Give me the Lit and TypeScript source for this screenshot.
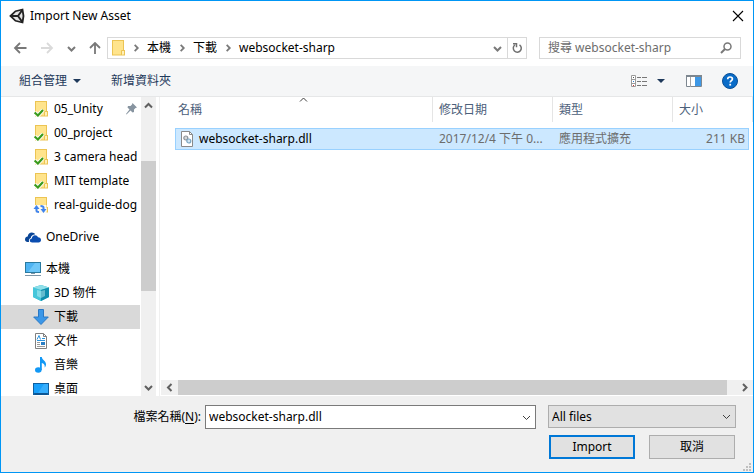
import { LitElement, html, css, svg, nothing } from "lit";
import { customElement, state } from "lit/decorators.js";
import { classMap } from "lit/directives/class-map.js";

const folderBody = svg`
  <path d="M2 0h12v10h1v5.500H2z" fill="#ecc453"/>
  <path d="M3 1h10v13.500H3z" fill="#ffe48c"/>
  <path d="M12 11h2v3.500h-2z" fill="#fff0b8"/><path d="M11.500 15V10.500H14" fill="none" stroke="#ecc453"/>`;

const icons = {
  folder: svg`${folderBody}
    <path d="M1.600 11.500l3.300 3L10 9" fill="none" stroke="#fff" stroke-width="4"/>
    <path d="M1.600 11.500l3.300 3L10 9" fill="none" stroke="#3a9b1c" stroke-width="2.200"/>`,
  sync: svg`${folderBody}
    <path d="M1 8h12.500v8H1z" fill="#fff" opacity=".85"/>
    <path d="M3.500 11v2.500q0 1.500 2.500 1.500M10.500 13v-2.500q0-1.500-3-1.500" fill="none" stroke="#3f83ee" stroke-width="2"/>
    <path d="M.500 12L3.500 8 6.500 12zM7.500 12h6l-3 4z" fill="#3f83ee"/>`,
  cloud: svg`
    <path d="M0 10.500C0 8.600 1.300 7.600 2.700 7.500 3 5 4.800 3.500 6.800 3.500c1.500 0 2.700.7 3.400 1.800C7.500 5.500 6 7 5.800 9 4.300 9.500 3.600 11 4 13H2.500C1 13 0 12 0 10.500z" fill="#0a4596"/>
    <path d="M7.200 13.500c-1.400 0-2.400-.8-2.400-2 0-1.200.9-2 2-2.100.1-1.900 1.500-3.200 3.200-3.200 1.400 0 2.500.8 3 2.100 1.700 0 3 1 3 2.700 0 1.500-1 2.500-2.400 2.500z" fill="#0a4db0"/>`,
  computer: svg`
    <path d="M0 1h16v11H0z" fill="#2a7a9f"/><path d="M1 2h14v9H1z" fill="#4fb4f3"/>
    <path d="M10 2h5v9H3z" fill="#86d3fc" opacity=".6"/>
    <path d="M6 12h4v1H6zM0 14h16v1H0z" fill="#7e95a6"/>`,
  cube: svg`
    <path d="M0 2.500L8 0l8 2.500v9.500L8 16 0 12z" fill="#27aec6"/>
    <path d="M0 2.500L8 5v11L0 12z" fill="#45c6da"/><path d="M0 2.500L8 0l8 2.500L8 5z" fill="#8fdfe9"/>
    <path d="M8 5l8-2.500V12L8 16z" fill="#118fae"/><path d="M4 5l4 1 4-1v6l-4 2-4-2z" fill="#c9f3f7" opacity=".45"/>`,
  download: svg`<path d="M5.500.500h5V8h4.800L8 15.500.700 8h4.800z" fill="#3b97e8" stroke="#2a78c4"/>`,
  document: svg`
    <path d="M2.500.500h8l3 3v12h-11z" fill="#fff" stroke="#808080"/><path d="M10.500.500v3h3" fill="none" stroke="#808080"/>
    <path d="M4 6.500l2-4 1.500 4M9 5.500h3M4 7.500h8" fill="none" stroke="#2b93dd"/>
    <path d="M4 9.500h3M4 11.500h3M4 13.500h8" stroke="#999"/><path d="M8 9h4v3H8z" fill="#2b7fc4"/>`,
  music: svg`
    <ellipse cx="5.300" cy="13" rx="3.300" ry="2.800" fill="#1298f5"/>
    <path d="M7 0h1.800c.2 3 4.400 3.800 4.200 7.500-.1 1.300-.6 2.200-1.300 3 .4-2.500-.8-4-2.900-4.500V13H7z" fill="#1298f5"/>`,
  desktop: svg`
    <path d="M0 2h16v12H0z" fill="#0f5fa0"/><path d="M1 3h14v9H1z" fill="#18a0fb"/>
    <path d="M11 3h4v9H5z" fill="#4bb8ff" opacity=".6"/><path d="M2 12.500h12v1H2z" fill="#0b4c86"/>`,
};

type IconName = keyof typeof icons;

interface Place {
  name: string;
  icon: IconName;
  top?: boolean;
  pinned?: boolean;
}

const groups: Place[][] = [
  [
    { name: "05_Unity", icon: "folder", pinned: true },
    { name: "00_project", icon: "folder" },
    { name: "3 camera head", icon: "folder" },
    { name: "MIT template", icon: "folder" },
    { name: "real-guide-dog", icon: "sync" },
  ],
  [{ name: "OneDrive", icon: "cloud", top: true }],
  [
    { name: "本機", icon: "computer", top: true },
    { name: "3D 物件", icon: "cube" },
    { name: "下載", icon: "download" },
    { name: "文件", icon: "document" },
    { name: "音樂", icon: "music" },
    { name: "桌面", icon: "desktop" },
  ],
];

const files = [
  { name: "websocket-sharp.dll", date: "2017/12/4 下午 0...", type: "應用程式擴充", size: "211 KB" },
];

type Direction = "up" | "down" | "left" | "right";
const chevronPaths: Record<Direction, string> = {
  up: "M1 6.500L4.500 3 8 6.500",
  down: "M1 3L4.500 6.500 8 3",
  left: "M6.500 1L3 4.500 6.500 8",
  right: "M3 1l3.500 3.500L3 8",
};
const chevron = (dir: Direction, kind = "bold") => html`
  <svg class="chevron ${kind}" viewBox="0 0 9 9" aria-hidden="true"><path d=${chevronPaths[dir]}/></svg>`;

@customElement("app-root")
export class AppRoot extends LitElement {
  @state() private current = "下載";
  @state() private fileName = "websocket-sharp.dll";

  static styles = css`
    :host {
      display: flex;
      flex-direction: column;
      box-sizing: border-box;
      min-height: 100vh;
      border: 1px solid #0096f5;
      background: #fff;
      color: #000;
      font: 12px/16px "Noto Sans", "Noto Sans CJK TC", sans-serif;
    }
    * { box-sizing: border-box; }
    button, input, select {
      font: inherit;
      color: inherit;
      margin: 0;
      padding: 0;
      border: 0;
      border-radius: 0;
      background: none;
      outline: none;
    }
    a { color: inherit; text-decoration: none; }
    svg { display: block; flex: none; }
    button { display: flex; align-items: center; justify-content: center; flex: none; }
    .chevron { width: 9px; height: 9px; fill: none; stroke: #606060; stroke-width: 2; }
    .chevron.thin { stroke: #404040; stroke-width: 1; }
    .chevron.soft { stroke: #7a7a7a; }
    .crumbs .chevron { width: 8px; height: 8px; }

    .titlebar { display: flex; align-items: center; height: 30px; padding: 0 9px 0 8px; gap: 5px; }
    .titlebar h1 { flex: 1; margin: 0; font: inherit; }

    .navrow { display: flex; align-items: center; height: 35px; padding: 0 12px 1px 12px; }
    .history { display: flex; width: 94px; justify-content: space-between; padding-right: 6px; }
    .address {
      display: flex; flex: 1; height: 22px; min-width: 0;
      border: 1px solid #d9d9d9;
    }
    .crumbs { display: flex; flex: 1; align-items: center; gap: 7px; padding-left: 4px; min-width: 0; }
    .address button { width: 19px; }
    .address .reload { border-left: 1px solid #d9d9d9; }
    .search {
      display: flex; align-items: center; width: 202px; height: 22px;
      margin-left: 12px; padding: 0 8px; border: 1px solid #d9d9d9;
    }
    .search input { flex: 1; min-width: 0; }
    .search input::placeholder { color: #6d6d6d; opacity: 1; }

    .toolbar {
      display: flex; align-items: center; height: 31px; padding: 0 15px 0 18px;
      background: #f5f6f7; border-bottom: 1px solid #e6e7e8; color: #1e395b;
    }
    .toolbar button { gap: 6px; }
    .toolbar .create { margin: 0 auto 0 30px; }
    .toolbar .views { gap: 10px; }
    .toolbar .preview { margin: 0 20px 0 21px; }

    .main { display: flex; flex: 1; min-height: 298px; }
    .places { width: 139px; height: 299px; overflow: hidden; }
    .places ul { list-style: none; margin: 0 0 8px; padding: 0; }
    .places a { display: flex; align-items: center; gap: 5px; height: 24px; padding-left: 32px; white-space: nowrap; }
    .places a.top { padding-left: 24px; }
    .places a.current { background: #d9d9d9; }
    .places .pin { margin-left: auto; margin-right: 3px; }

    .vscroll {
      display: flex; flex-direction: column; width: 17px; padding: 0 1px;
      background: #f0f0f0; background-clip: content-box;
    }
    .vscroll button { height: 17px; }
    .vscroll .before { flex: 47; }
    .vscroll .thumb { flex: 129; background: #cdcdcd; }
    .vscroll .after { flex: 88; }

    .pane {
      display: flex; flex: 1; flex-direction: column; min-width: 0;
      margin-left: 2px; padding-left: 1px; border-left: 1px solid #f0f0f0;
    }
    .list { flex: 1; padding-left: 14px; }
    table { width: 100%; table-layout: fixed; border-collapse: separate; border-spacing: 0; }
    th { height: 25px; padding: 0 6px; text-align: left; font-weight: 400; color: #4c607a; border-right: 1px solid #e5e5e5; }
    th.name { position: relative; padding-left: 3px; }
    th.name .sort { position: absolute; top: -2px; left: 50%; margin-left: -5px; }
    th.size { border-right: 0; }
    th.edge { padding: 0; }
    .date, .type { width: 120px; }
    .size { width: 76px; }
    .edge { width: 4px; }
    .gap td { height: 6px; padding: 0; }
    .file td {
      height: 22px; padding: 0 6px; white-space: nowrap;
      background: #cce8ff; border: solid #99d1ff; border-width: 1px 0; color: #6d6d6d;
    }
    .file td.name { border-left-width: 1px; padding-left: 3px; color: #000; }
    .file td.size { border-right-width: 1px; padding: 0 3px; text-align: right; }
    .label { display: flex; align-items: center; gap: 4px; }

    .hscroll { display: flex; height: 16px; background: #f0f0f0; border-bottom: 1px solid #fff; }
    .hscroll button { width: 17px; }
    .hscroll .thumb { flex: 1; background: #cdcdcd; }
    .hscroll .right { width: 26px; justify-content: flex-end; padding-right: 4px; }

    .footer {
      display: grid; grid-template-columns: 204px 1fr 188px; row-gap: 6px;
      padding: 9px 17px 13px 0; background: #f0f0f0; position: relative;
    }
    .footer label { justify-self: end; align-self: center; padding-right: 4px; white-space: nowrap; }
    .footer u { text-underline-offset: 2px; }
    .combo { display: flex; align-items: center; height: 24px; margin-right: 12px; border: 1px solid #7a7a7a; background: #fff; }
    .combo input { flex: 1; min-width: 0; padding-left: 3px; }
    .combo button { width: 17px; height: 22px; }
    .filter { display: grid; align-items: center; height: 23px; border: 1px solid #adadad; background: #e1e1e1; }
    .filter > * { grid-area: 1 / 1; }
    .filter select { appearance: none; padding-left: 3px; height: 21px; }
    .filter svg { justify-self: end; margin-right: 4px; pointer-events: none; }
    .actions { grid-column: 3; display: flex; justify-content: space-between; padding: 0 1px; }
    .actions button { width: 86px; height: 24px; border: 1px solid #adadad; background: #e1e1e1; }
    .actions .primary { border: 2px solid #0078d7; }
    .grip { position: absolute; right: 2px; bottom: 1px; }
  `;

  private renderPlace(p: Place) {
    return html`<li>
      <a href="#${p.name}" class=${classMap({ top: !!p.top, current: p.name === this.current })}
        @click=${() => (this.current = p.name)}>
        <svg width="16" height="16" viewBox="0 0 16 16" aria-hidden="true">${icons[p.icon]}</svg>
        <span>${p.name}</span>
        ${p.pinned
          ? html`<svg class="pin" width="11" height="12" viewBox="0 0 11 12" aria-hidden="true">
              <path d="M6.500 0L11 4.500 9.500 5 8 6.500 8 9 6.500 9.500 4.500 7.500.500 11.500 0 11 3.500 6.500 1.500 4.500 2 3h2.500L6 1.500z" fill="#8794a0"/></svg>`
          : nothing}
      </a>
    </li>`;
  }

  render() {
    return html`
      <header class="titlebar">
        <svg width="16" height="16" viewBox="0 0 16 16" aria-hidden="true">
          <path d="M1.500 8L6.500 3.200 13.500 1.500 14.500 8l-1 6.500-7-1.700z" fill="#e4e4e4" stroke="#222" stroke-width="1.800"/>
          <path d="M1.500 8H9M9 8l4.300-6M9 8l4.300 6" stroke="#222" stroke-width="2"/>
        </svg>
        <h1>Import New Asset</h1>
        <button aria-label="Close">
          <svg width="12" height="12" viewBox="0 0 12 12"><path d="M1 1l10 10M11 1L1 11" stroke="#000" stroke-width="1.100"/></svg>
        </button>
      </header>

      <div class="navrow">
        <div class="history">
          <button aria-label="Back">
            <svg width="14" height="12" viewBox="0 0 14 12"><path d="M7 1L2 6l5 5M2 6h11.500" fill="none" stroke="#787878" stroke-width="1.800"/></svg>
          </button>
          <button aria-label="Forward">
            <svg width="14" height="12" viewBox="0 0 14 12"><path d="M7 1l5 5-5 5M12 6H1" fill="none" stroke="#dadada" stroke-width="1.800"/></svg>
          </button>
          <button aria-label="Recent locations">${chevron("down", "soft")}</button>
          <button aria-label="Up">
            <svg width="12" height="12" viewBox="0 0 12 12"><path d="M1 6l5-5 5 5M6 1v11" fill="none" stroke="#787878" stroke-width="1.800"/></svg>
          </button>
        </div>
        <div class="address">
          <nav class="crumbs" aria-label="Path">
            <svg width="13" height="16" viewBox="2 0 13 16" aria-hidden="true">${folderBody}</svg>
            ${["本機", "下載", "websocket-sharp"].map((c) => html`${chevron("right", "soft")}<a href="#${c}">${c}</a>`)}
          </nav>
          <button aria-label="Previous locations">${chevron("down", "soft")}</button>
          <button class="reload" aria-label="Refresh">
            <svg width="11" height="12" viewBox="0 0 11 12"><path d="M7.500 2.800A4 4 0 1 1 2.800 3M1 1.700h3.500v3.500" fill="none" stroke="#707070" stroke-width="1.500"/></svg>
          </button>
        </div>
        <div class="search">
          <input type="search" aria-label="搜尋" placeholder="搜尋 websocket-sharp" />
          <svg width="12" height="12" viewBox="0 0 12 12" aria-hidden="true"><circle cx="7.500" cy="4.500" r="3.500" fill="none" stroke="#787878" stroke-width="1.500"/><path d="M5 7L1 11" stroke="#787878" stroke-width="2"/></svg>
        </div>
      </div>

      <div class="toolbar">
        <button>組合管理
          <svg width="8" height="4" viewBox="0 0 8 4" aria-hidden="true"><path d="M0 0h8L4 4z" fill="#1e395b"/></svg>
        </button>
        <button class="create">新增資料夾</button>
        <button class="views" aria-label="View">
          <svg width="16" height="12" viewBox="0 0 16 12">
            <path d="M.500.500h4v11h-4zM.500 4.500h4M.500 8.500h4" fill="#fff" stroke="#9a9a9a"/>
            <path d="M6 2.500h4M11 2.500h5M6 6.500h4M11 6.500h5M6 10.500h4M11 10.500h5" stroke="#777"/>
            <path d="M2 2h1v1H2z" fill="#555"/><path d="M2 6h1v1H2z" fill="#2f7fd0"/><path d="M2 10h1v1H2z" fill="#c33"/>
          </svg>
          <svg width="8" height="4" viewBox="0 0 8 4"><path d="M0 0h8L4 4z" fill="#1e395b"/></svg>
        </button>
        <button class="preview" aria-label="Preview pane">
          <svg width="16" height="12" viewBox="0 0 16 12">
            <path d="M.500.500h15v11H.500z" fill="#fff" stroke="#7d8790"/><path d="M0 0h16v2H0z" fill="#7d8790"/>
            <path d="M4.500 2v10" stroke="#a5a5a5"/><path d="M9 2h6v9H9z" fill="#3e98e6"/>
          </svg>
        </button>
        <button aria-label="Help">
          <svg width="16" height="16" viewBox="0 0 16 16"><circle cx="8" cy="8" r="7.500" fill="#0a6cc8" stroke="#0a4f96"/>
            <path d="M5.700 6.200C5.700 4.700 6.700 4 8 4s2.400.8 2.400 2c0 1.600-2.200 1.700-2.200 3.600" fill="none" stroke="#fff" stroke-width="1.700"/><path d="M7.300 10.800h1.800v1.800H7.300z" fill="#fff"/></svg>
        </button>
      </div>

      <div class="main">
        <nav class="places" aria-label="Places">
          ${groups.map((g) => html`<ul>${g.map((p) => this.renderPlace(p))}</ul>`)}
        </nav>
        <div class="vscroll">
          <button aria-label="Scroll up">${chevron("up")}</button>
          <div class="before"></div><div class="thumb"></div><div class="after"></div>
          <button aria-label="Scroll down">${chevron("down")}</button>
        </div>
        <section class="pane">
          <div class="list">
            <table>
              <thead>
                <tr>
                  <th class="name">名稱<span class="sort">${chevron("up", "thin")}</span></th>
                  <th class="date">修改日期</th>
                  <th class="type">類型</th>
                  <th class="size">大小</th>
                  <th class="edge"></th>
                </tr>
              </thead>
              <tbody>
                <tr class="gap"><td colspan="5"></td></tr>
                ${files.map((f) => html`<tr class="file" @click=${() => (this.fileName = f.name)}>
                  <td class="name"><span class="label">
                    <svg width="16" height="16" viewBox="0 0 16 16" aria-hidden="true">
                      <path d="M2.500.500h8l3 3v12h-11z" fill="#fff" stroke="#8a8a8a"/><path d="M10.500.500v3h3" fill="none" stroke="#8a8a8a"/>
                      <circle cx="6.800" cy="7" r="2" fill="#d5d8da" stroke="#8c9299" stroke-width="1.200"/>
                      <circle cx="9.800" cy="10" r="2" fill="#d3e5f0" stroke="#79a5c2" stroke-width="1.200"/>
                    </svg>${f.name}</span></td>
                  <td class="date">${f.date}</td>
                  <td class="type">${f.type}</td>
                  <td class="size">${f.size}</td>
                </tr>`)}
              </tbody>
            </table>
          </div>
          <div class="hscroll">
            <button aria-label="Scroll left">${chevron("left")}</button>
            <div class="thumb"></div>
            <button class="right" aria-label="Scroll right">${chevron("right")}</button>
          </div>
        </section>
      </div>

      <footer class="footer">
        <label for="file-name">檔案名稱(<u>N</u>):</label>
        <div class="combo">
          <input id="file-name" type="text" .value=${this.fileName} />
          <button aria-label="Recent files">${chevron("down", "thin")}</button>
        </div>
        <div class="filter">
          <select aria-label="File type"><option>All files</option></select>
          ${chevron("down", "thin")}
        </div>
        <div class="actions">
          <button class="primary">Import</button>
          <button>取消</button>
        </div>
        <svg class="grip" width="8" height="8" viewBox="0 0 8 8" aria-hidden="true">
          <path d="M6 0h2v2H6zM3 3h2v2H3zM6 3h2v2H6zM0 6h2v2H0zM3 6h2v2H3zM6 6h2v2H6z" fill="#bfbfbf"/>
        </svg>
      </footer>
    `;
  }
}
